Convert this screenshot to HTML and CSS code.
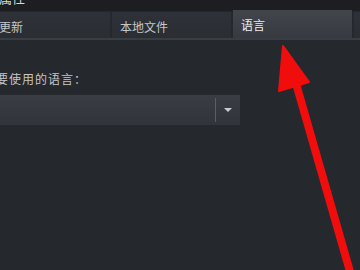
FILE: index.html
```html
<!DOCTYPE html>
<html lang="zh-CN">
<head>
  <meta charset="UTF-8">
  <title>属性 - 语言</title>
  <link rel="stylesheet" href="styles.css">
</head>
<body>
<div class="window">
  <div class="titlebar"><span class="title">属性</span></div>

  <div class="tabs">
    <div class="tab">更新</div>
    <div class="tab">本地文件</div>
    <div class="tab active">语言</div>
    <div class="tab"></div>
  </div>

  <div class="content">
    <div class="label">要使用的语言：</div>
    <div class="select">
      <div class="select-value"></div>
      <div class="select-btn"><span class="caret"></span></div>
    </div>
  </div>

  <svg class="pointer" width="360" height="270" viewBox="0 0 360 270">
    <line x1="295" y1="80" x2="351" y2="275" stroke="#f20d0d" stroke-width="8" stroke-linecap="round"/>
    <polygon points="283,46 279,91 309,82" fill="#f20d0d" stroke="#f20d0d" stroke-width="2" stroke-linejoin="round"/>
  </svg>
</div>
</body>
</html>
```

FILE: styles.css
```css
* { box-sizing: border-box; }
html, body {
  margin: 0;
  background: #25282d;
  overflow: hidden;
}

.window {
  position: relative;
  width: 360px;
  height: 270px;
  font-family: "Noto Sans CJK SC", "Liberation Sans", sans-serif;
  color: #c9cbcf;
}

.titlebar {
  height: 11px;
  background: #1c1e22;
  overflow: hidden;
}

.title {
  display: block;
  margin-top: -10px;
  margin-left: -1px;
  font-size: 13px;
  line-height: 16px;
  color: #d6d8db;
}

.tabs {
  display: flex;
  gap: 2px;
  height: 29px;
  margin-left: -9px;
  background: #25282d;
  border-bottom: 2px solid #3a3d43;
}

.tab {
  flex: 0 0 119px;
  height: 26px;
  margin-top: 1px;
  padding: 7px 0 0 8px;
  font-size: 12px;
  line-height: 16px;
  color: #c3c6ca;
  background: linear-gradient(#2e3137, #2a2d32);
}

.tab.active {
  height: 28px;
  margin-top: -1px;
  color: #eceef0;
  background: linear-gradient(#42454c, #373a40);
}

.content {
  padding: 31px 0 0 0;
}

.label {
  margin-left: -4px;
  font-size: 12px;
  line-height: 16px;
  letter-spacing: 1px;
  color: #c3c6ca;
}

.select {
  display: flex;
  width: 240px;
  height: 30px;
  margin-top: 8px;
  background: linear-gradient(#3a3d44, #31343a);
}

.select-value {
  flex: 1;
}

.select-btn {
  display: flex;
  align-items: center;
  justify-content: center;
  width: 25px;
  border-left: 1px solid #5a5d63;
  margin: 3px 0;
}

.caret {
  width: 0;
  height: 0;
  border-left: 4px solid transparent;
  border-right: 4px solid transparent;
  border-top: 4px solid #c9cbcf;
}

.pointer {
  position: absolute;
  left: 0;
  top: 0;
}
```
